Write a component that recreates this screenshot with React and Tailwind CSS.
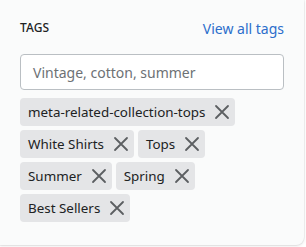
const tags = [
  "meta-related-collection-tops",
  "White Shirts",
  "Tops",
  "Summer",
  "Spring",
  "Best Sellers",
];

function XIcon() {
  return (
    <svg viewBox="0 0 20 20" className="w-5 h-5" fill="none" stroke="#5c5f62" strokeWidth="1.8" strokeLinecap="round">
      <path d="M4 4l12 12M16 4L4 16" />
    </svg>
  );
}

export default function App() {
  return (
    <div className="w-[306px] h-[247px] bg-white" style={{ fontFamily: '"Noto Sans", "Segoe UI", sans-serif' }}>
      <div className="w-[304px] h-[245px] bg-[#fafbfb] rounded-br-lg shadow-[0_0_0_1px_rgba(63,63,68,0.05),0_1px_3px_0_rgba(63,63,68,0.15)] pl-5 pr-5 pt-[18px]">
        <div className="flex items-center justify-between h-5">
          <span className="text-[12px] font-medium text-[#202223] tracking-[0.1px]">TAGS</span>
          <a className="text-[14px] text-[#2c6ecb]">View all tags</a>
        </div>
        <div className="mt-[16px] h-[36px] border border-[#babfc3] rounded-[4px] bg-white flex items-center px-3">
          <span className="text-[14px] text-[#6d7175]">Vintage, cotton, summer</span>
        </div>
        <div className="mt-2 flex flex-wrap gap-1 w-[240px]">
          {tags.map((t) => (
            <span key={t} className="h-[28px] bg-[#e4e5e7] rounded-[4px] flex items-center pl-[8px] pr-[3px] gap-[7px] text-[13.4px] text-[#202223]">
              {t}
              <XIcon />
            </span>
          ))}
        </div>
      </div>
    </div>
  );
}
